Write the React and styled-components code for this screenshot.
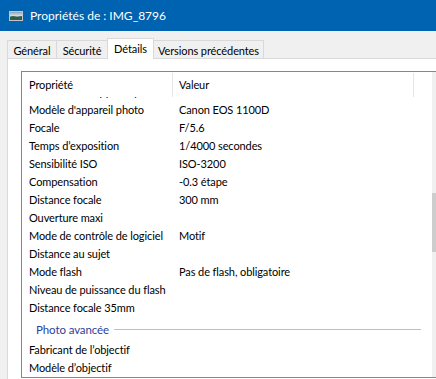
import React from "react";
import styled, { createGlobalStyle } from "styled-components";

const GlobalStyle = createGlobalStyle`
  html, body { margin: 0; padding: 0; background: #f0f0f0; }
  body { font-family: Lato, "Noto Sans", sans-serif; font-size: 11px; letter-spacing: -0.1px; color: #000; }
  * { box-sizing: border-box; }
`;

const Window = styled.div`
  width: 436px;
  height: 379px;
  overflow: hidden;
  background: #f0f0f0;
  display: flex;
  flex-direction: column;
`;

const TitleBar = styled.div`
  height: 31px;
  flex: none;
  background: #0063b1;
  display: flex;
  align-items: center;
  gap: 7px;
  padding-left: 9px;
  color: #fff;
  font-size: 12px;
  letter-spacing: 0;
`;

const TitleText = styled.span`
  line-height: 16px;
  padding-top: 1px;
`;

const TabRow = styled.div`
  flex: none;
  height: 20px;
  margin-top: 7px;
  padding-left: 7px;
  display: flex;
  align-items: flex-end;
`;

const Tab = styled.div`
  width: ${(p) => p.$w}px;
  height: ${(p) => (p.$active ? 21 : 18)}px;
  margin-left: -1px;
  margin-bottom: ${(p) => (p.$active ? -1 : 0)}px;
  position: relative;
  z-index: ${(p) => (p.$active ? 1 : 0)};
  border: 1px solid #d9d9d9;
  border-bottom: 0;
  background: ${(p) => (p.$active ? "#fff" : "#f0f0f0")};
  text-align: center;
  line-height: 14px;
  padding-top: 3px;
  white-space: nowrap;
  &:first-child { margin-left: 0; }
`;

const Pane = styled.div`
  flex: 1;
  margin-left: 7px;
  width: 460px;
  background: #fff;
  border-top: 1px solid #d9d9d9;
  border-left: 1px solid #d9d9d9;
  padding: 12px 0 0 13px;
`;

const ListView = styled.div`
  width: 429px;
  height: 307px;
  border: 1px solid #828790;
  display: flex;
  background: #fff;
`;

const ListMain = styled.div`
  width: 410px;
  display: flex;
  flex-direction: column;
`;

const Header = styled.div`
  flex: none;
  height: 25px;
  display: grid;
  grid-template-columns: 150px 1px 240px 1px;
  align-items: center;
`;

const HeaderCell = styled.div`
  padding-left: ${(p) => p.$pad}px;
  line-height: 16px;
  padding-top: 1px;
`;

const Divider = styled.div`
  align-self: start;
  margin-top: 1px;
  height: 24px;
  background: #e5e5e5;
`;

const Body = styled.div`
  flex: 1;
  overflow: hidden;
`;

const Rows = styled.div`
  margin-top: -14px;
`;

const Row = styled.div`
  height: 18px;
  display: grid;
  grid-template-columns: 151px 1fr;
  line-height: 18px;
  white-space: nowrap;
`;

const NameCell = styled.div`
  padding-left: 7px;
  overflow: hidden;
`;

const ValueCell = styled.div`
  padding-left: 6px;
`;

const GroupRow = styled.div`
  height: 24px;
  display: flex;
  align-items: center;
  gap: 5px;
  padding-left: 14px;
  padding-right: 11px;
  color: #2a3f9e;
  white-space: nowrap;
`;

const GroupLabel = styled.span`
  line-height: 16px;
  padding-top: 1px;
  font-size: 11.5px;
`;

const GroupLine = styled.div`
  flex: 1;
  height: 1px;
  background: #b0bfe4;
`;

const ScrollTrack = styled.div`
  width: 17px;
  background: #f0f0f0;
  display: flex;
  flex-direction: column;
`;

const ScrollThumb = styled.div`
  margin-top: ${(p) => p.$top}px;
  height: ${(p) => p.$h}px;
  background: #cdcdcd;
`;

const ImageIcon = () => (
  <svg width="14" height="10" viewBox="0 0 14 10">
    <defs>
      <linearGradient id="sky" x1="0" y1="0" x2="0" y2="1">
        <stop offset="0" stopColor="#8fa3b4" />
        <stop offset="1" stopColor="#e4ecf1" />
      </linearGradient>
    </defs>
    <rect x="0.5" y="0.5" width="13" height="9" fill="#fff" stroke="#c2c6ca" />
    <rect x="1" y="1" width="12" height="4.5" fill="url(#sky)" />
    <path d="M1 5.5 L4 5 L8 5.6 L13 5 V9 H1 Z" fill="#2f5e4e" />
  </svg>
);

const rows = [
  ["Fabricant de l'appareil photo", "Canon"],
  ["Modèle d'appareil photo", "Canon EOS 1100D"],
  ["Focale", "F/5.6"],
  ["Temps d\u2019exposition", "1/4000 secondes"],
  ["Sensibilité ISO", "ISO-3200"],
  ["Compensation", "-0.3 étape"],
  ["Distance focale", "300 mm"],
  ["Ouverture maxi", ""],
  ["Mode de contrôle de logiciel", "Motif"],
  ["Distance au sujet", ""],
  ["Mode flash", "Pas de flash, obligatoire"],
  ["Niveau de puissance du flash", ""],
  ["Distance focale 35mm", ""],
];

const advanced = [
  ["Fabricant de l\u2019objectif", ""],
  ["Modèle d\u2019objectif", ""],
];

const tabs = [
  { label: "Général", w: 50 },
  { label: "Sécurité", w: 52 },
  { label: "Détails", w: 47, active: true },
  { label: "Versions précédentes", w: 111 },
];

export default function App() {
  return (
    <>
      <GlobalStyle />
      <Window>
        <TitleBar>
          <ImageIcon />
          <TitleText>Propriétés de : IMG_8796</TitleText>
        </TitleBar>
        <TabRow>
          {tabs.map((t) => (
            <Tab key={t.label} $w={t.w} $active={t.active}>
              {t.label}
            </Tab>
          ))}
        </TabRow>
        <Pane>
          <ListView>
            <ListMain>
              <Header>
                <HeaderCell $pad={7}>Propriété</HeaderCell>
                <Divider />
                <HeaderCell $pad={6}>Valeur</HeaderCell>
                <Divider />
              </Header>
              <Body>
                <Rows>
                  {rows.map(([n, v]) => (
                    <Row key={n}>
                      <NameCell>{n}</NameCell>
                      <ValueCell>{v}</ValueCell>
                    </Row>
                  ))}
                  <GroupRow>
                    <GroupLabel>Photo avancée</GroupLabel>
                    <GroupLine />
                  </GroupRow>
                  {advanced.map(([n, v]) => (
                    <Row key={n}>
                      <NameCell>{n}</NameCell>
                      <ValueCell>{v}</ValueCell>
                    </Row>
                  ))}
                </Rows>
              </Body>
            </ListMain>
            <ScrollTrack>
              <ScrollThumb $top={121} $h={59} />
            </ScrollTrack>
          </ListView>
        </Pane>
      </Window>
    </>
  );
}
